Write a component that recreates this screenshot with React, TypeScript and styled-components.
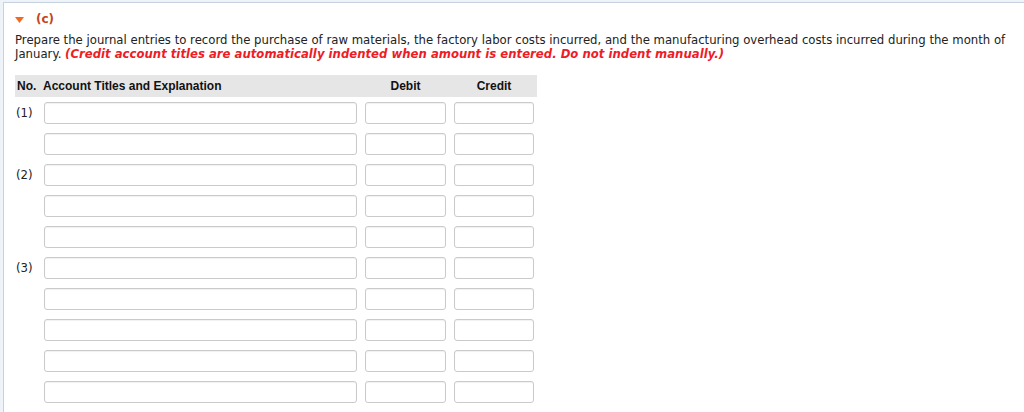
import React from "react";
import styled, { createGlobalStyle } from "styled-components";

const GlobalStyle = createGlobalStyle`
  html, body {
    margin: 0;
    padding: 0;
    background: #eef3f9;
    overflow: hidden;
  }
  body {
    font-family: "DejaVu Sans", Verdana, sans-serif;
    color: #222;
  }
`;

const Panel = styled.div`
  margin: 2px 0 0 3px;
  min-height: 420px;
  background: #fff;
  border-top: 1px solid #c7d2df;
  border-left: 1px solid #c7d2df;
  padding: 9px 0 0 11px;
  box-sizing: border-box;
`;

const Title = styled.div`
  display: flex;
  align-items: center;
  gap: 12px;
  height: 14px;
  color: #c4461a;
  font-weight: bold;
  font-size: 12px;
`;

const Caret = styled.svg`
  width: 9px;
  height: 6px;
  display: block;
  margin-top: 1px;
`;

const Prompt = styled.p`
  margin: 7px 0 0;
  font-size: 11.7px;
  line-height: 14px;
  max-width: 1000px;
`;

const Note = styled.em`
  color: #ee1c25;
  font-weight: bold;
`;

const Sheet = styled.div`
  margin-top: 14px;
  width: 522px;
`;

const Grid = styled.div`
  display: grid;
  grid-template-columns: 21px 313px 81px 80px;
  column-gap: 8px;
  align-items: center;
`;

const HeaderRow = styled(Grid)`
  height: 22px;
  background: #e6e6e6;
  font-family: "Liberation Sans", Arial, sans-serif;
  font-weight: bold;
  font-size: 12px;
  color: #111;
`;

const HeadCell = styled.div<{ $center?: boolean; $pad?: number }>`
  text-align: ${(p) => (p.$center ? "center" : "left")};
  margin-left: ${(p) => p.$pad ?? 0}px;
  white-space: nowrap;
`;

const Body = styled.div`
  display: flex;
  flex-direction: column;
  gap: 9px;
  padding-top: 5px;
`;

const Label = styled.div`
  font-size: 11.7px;
  padding-left: 1px;
  color: #222;
  white-space: nowrap;
`;

const Field = styled.input`
  box-sizing: border-box;
  width: 100%;
  height: 22px;
  margin: 0;
  border: 1px solid #cacaca;
  border-radius: 3px;
  background: #fff;
  box-shadow: inset 0 1px 1px rgba(0, 0, 0, 0.06);
  outline: none;
  font-family: "DejaVu Sans", Verdana, sans-serif;
  font-size: 11px;
`;

const entries = [
  { label: "(1)", lines: 2 },
  { label: "(2)", lines: 3 },
  { label: "(3)", lines: 5 },
];

export default function App() {
  const rows: { label: string; key: string }[] = [];
  entries.forEach((e) => {
    for (let i = 0; i < e.lines; i++) {
      rows.push({ label: i === 0 ? e.label : "", key: `${e.label}-${i}` });
    }
  });

  return (
    <>
      <GlobalStyle />
      <Panel>
        <Title>
          <Caret viewBox="0 0 9 6">
            <polygon points="0,0 9,0 4.5,6" fill="#f26a22" />
          </Caret>
          <span>(c)</span>
        </Title>
        <Prompt>
          Prepare the journal entries to record the purchase of raw materials, the factory labor costs incurred, and the
          manufacturing overhead costs incurred during the month of January.{" "}
          <Note>(Credit account titles are automatically indented when amount is entered. Do not indent manually.)</Note>
        </Prompt>
        <Sheet>
          <HeaderRow>
            <HeadCell $pad={2}>No.</HeadCell>
            <HeadCell $pad={-1}>Account Titles and Explanation</HeadCell>
            <HeadCell $center>Debit</HeadCell>
            <HeadCell $center>Credit</HeadCell>
          </HeaderRow>
          <Body>
            {rows.map((r) => (
              <Grid key={r.key}>
                <Label>{r.label}</Label>
                <Field type="text" />
                <Field type="text" />
                <Field type="text" />
              </Grid>
            ))}
          </Body>
        </Sheet>
      </Panel>
    </>
  );
}
